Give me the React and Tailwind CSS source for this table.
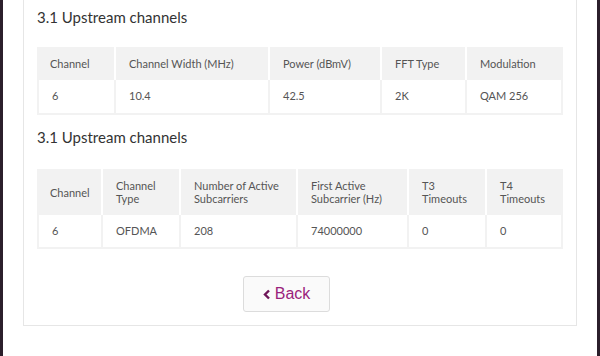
import React from "react";

const font = { fontFamily: "Lato, 'Liberation Sans', Arial, sans-serif" };

function DataTable({ cols, widths, row, headH, bodyH }) {
  return (
    <table className="w-full border-separate border-spacing-0 table-fixed text-[11px] text-[#555]">
      <colgroup>
        {widths.map((w, i) => (
          <col key={i} style={{ width: w }} />
        ))}
      </colgroup>
      <thead>
        <tr>
          {cols.map((c, i) => (
            <th
              key={i}
              className={`bg-[#f2f2f2] text-left font-normal px-[13px] leading-[13px] align-middle ${headH} ${
                i < cols.length - 1 ? "border-r-2 border-white" : ""
              }`}
            >
              {c}
            </th>
          ))}
        </tr>
      </thead>
      <tbody>
        <tr>
          {row.map((v, i) => (
            <td
              key={i}
              className={`px-[13px] align-middle border-b-2 border-r-2 border-[#f2f2f2] ${bodyH} ${
                i === 0 ? "border-l-2" : ""
              }`}
            >
              {v}
            </td>
          ))}
        </tr>
      </tbody>
    </table>
  );
}

export default function App() {
  return (
    <div className="w-[600px] h-[356px] bg-white flex overflow-hidden" style={font}>
      <div className="w-[3px] h-full bg-[#2b1f2b]" />
      <div className="flex-1 px-[20px]">
        <div className="w-[554px] border border-[#e6e6e6] border-t-0 bg-white px-[13px] pt-[8px] pb-[13px] h-[326px]">
          <h2 className="text-[15px] text-[#333] leading-[18px] mb-[21px]">3.1 Upstream channels</h2>
          <DataTable
            cols={["Channel", "Channel Width (MHz)", "Power (dBmV)", "FFT Type", "Modulation"]}
            widths={["79px", "154px", "112px", "85px", "96px"]}
            row={["6", "10.4", "42.5", "2K", "QAM 256"]}
            headH="h-[33px]"
            bodyH="h-[35px]"
          />
          <h2 className="text-[15px] text-[#333] leading-[18px] mt-[13px] mb-[23px]">3.1 Upstream channels</h2>
          <DataTable
            cols={["Channel", "Channel Type", "Number of Active Subcarriers", "First Active Subcarrier (Hz)", "T3 Timeouts", "T4 Timeouts"]}
            widths={["66px", "78px", "117px", "111px", "78px", "76px"]}
            row={["6", "OFDMA", "208", "74000000", "0", "0"]}
            headH="h-[46px]"
            bodyH="h-[34px]"
          />
          <div className="flex mt-[27px] pl-[206px]">
            <button
              className="w-[87px] h-[36px] border border-[#dcdcdc] rounded-[3px] bg-[#fafafa] flex items-center justify-center gap-[4px] text-[16px] text-[#9b1f7c]"
              style={{ fontFamily: "'Liberation Sans', Arial, sans-serif" }}
            >
              <svg width="8" height="11" viewBox="0 0 8 11">
                <path d="M6 1.5 L2 5.5 L6 9.5" fill="none" stroke="#6e1558" strokeWidth="2.4" />
              </svg>
              <span>Back</span>
            </button>
          </div>
        </div>
      </div>
      <div className="w-[3px] h-full bg-[#2b1f2b]" />
    </div>
  );
}
